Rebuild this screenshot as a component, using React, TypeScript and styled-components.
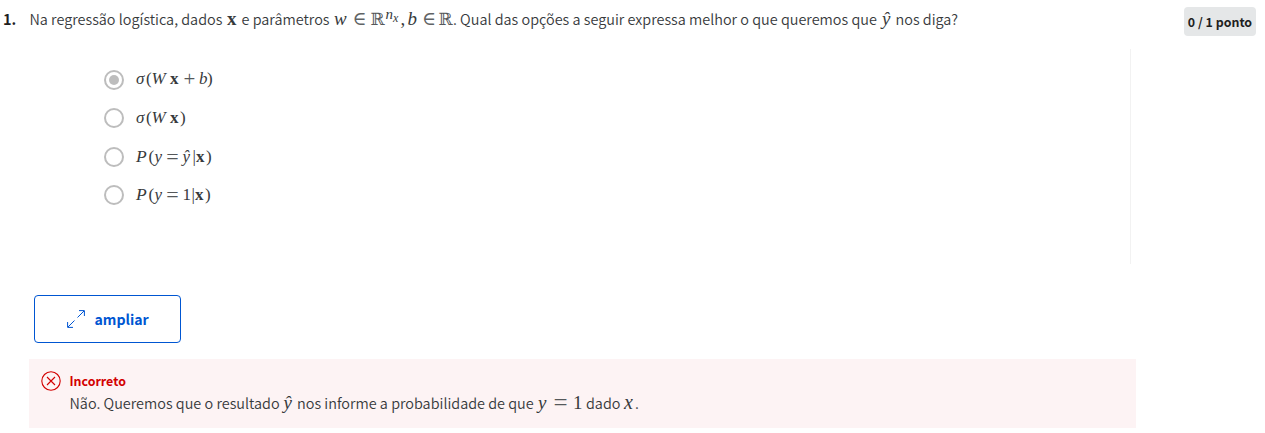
import React from "react";
import styled, { createGlobalStyle } from "styled-components";

const GlobalStyle = createGlobalStyle`
  * { box-sizing: border-box; }
  body {
    margin: 0;
    background: #fff;
    color: #373a3c;
    font-family: "Noto Sans CJK JP", "Noto Sans", sans-serif;
    font-size: 14.43px;
  }
`;

const Page = styled.main`
  display: flex;
  flex-direction: column;
  height: 433px;
  overflow: hidden;
`;

const Header = styled.header`
  display: flex;
  align-items: flex-start;
  height: 49px;
  padding-left: 3px;
`;

const Number = styled.strong`
  flex: none;
  width: 26.5px;
  padding-top: 7px;
  font-size: 14.5px;
  line-height: 24px;
  color: #1f1f1f;
`;

const Line = styled.p`
  display: flex;
  align-items: baseline;
  margin: 0;
  height: 24px;
  line-height: 24px;
  white-space: pre;
`;

const Prompt = styled(Line)`
  flex: 1;
  margin-top: 7px;
`;

const Run = styled.span<{ $w: number }>`
  flex: none;
  width: ${(p) => p.$w}px;
  font-weight: 350;
`;

const Sym = styled.span<{ $w: number; $size?: number }>`
  flex: none;
  width: ${(p) => p.$w}px;
  font-family: "Liberation Serif", "DejaVu Serif", serif;
  font-size: ${(p) => p.$size ?? 19}px;
  line-height: 20px;
`;

const Italic = styled(Sym)`
  font-style: italic;
`;

const Bold = styled(Sym)`
  font-weight: 700;
`;

const Double = styled(Sym)`
  font-family: "DejaVu Serif", serif;
  color: #55585a;
`;

const Element = styled(Sym)`
  color: #606365;
`;

const Relation = styled(Sym)`
  position: relative;
  top: 2px;
  display: flex;
  justify-content: center;
  padding-right: 2px;
  line-height: 12px;
  color: #55585a;
`;

const Exponent = styled(Italic)`
  position: relative;
  top: -6px;
`;

const Subscript = styled.span`
  position: relative;
  top: 3px;
  font-size: 12px;
`;

const Points = styled.span`
  flex: none;
  width: 72px;
  height: 29px;
  margin: 7px 9px 0 0;
  border-radius: 4px;
  background: #e5e7e8;
  color: #1f1f1f;
  font-size: 12.4px;
  font-weight: 700;
  line-height: 30px;
  text-align: center;
  white-space: nowrap;
`;

const Options = styled.div`
  display: flex;
  flex-direction: column;
  width: 1131px;
  height: 215px;
  padding: 11.6px 0 0 104px;
  border-right: 1px solid #f2f2f2;
`;

const Option = styled.label`
  display: flex;
  align-items: center;
  height: 38.4px;
`;

const Radio = styled.span<{ $checked?: boolean }>`
  display: grid;
  place-items: center;
  flex: none;
  width: 20px;
  height: 20px;
  margin-right: 12px;
  border: 2px solid #bdbdbd;
  border-radius: 50%;

  &::after {
    content: "";
    width: 10px;
    height: 10px;
    border-radius: 50%;
    background: ${(p) => (p.$checked ? "#bdbdbd" : "transparent")};
  }
`;

const Formula = styled.span`
  display: flex;
  align-items: baseline;
  height: 20px;
  margin-bottom: 1.2px;
  line-height: 20px;
  white-space: pre;
`;

const ExpandButton = styled.button`
  display: flex;
  flex: none;
  align-items: center;
  width: 147px;
  height: 48px;
  margin: 31px 0 0 34px;
  padding: 0 0 0 32px;
  border: 1px solid #0056d2;
  border-radius: 4px;
  background: #fff;
  color: #0056d2;
  font-family: inherit;
  font-size: 14.1px;
  font-weight: 700;
  line-height: 24px;

  svg { margin-right: 9.5px; }
`;

const Feedback = styled.section`
  display: flex;
  align-items: flex-start;
  width: 1107px;
  height: 69px;
  margin: 16px 0 0 29px;
  padding: 12px 0 0 12px;
  background: #fdf3f4;

  svg { flex: none; margin-right: 8.5px; }
`;

const Verdict = styled.strong`
  display: block;
  height: 20px;
  color: #d30001;
  font-size: 12.4px;
  line-height: 20px;
`;

export default function App() {
  return (
    <Page>
      <GlobalStyle />
      <Header>
        <Number>1.</Number>
        <Prompt>
          <Run $w={197.5}>Na regressão logística, dados</Run>
          <Bold $w={14.5}>x</Bold>
          <Run $w={92.5}>e parâmetros</Run>
          <Italic $w={18.5}>w</Italic>
          <Element $w={18} $size={19}>∈</Element>
          <Double $w={15} $size={17}>ℝ</Double>
          <Exponent $w={15} $size={15}>n<Subscript>x</Subscript></Exponent>
          <Sym $w={7}>,</Sym>
          <Italic $w={14.5}>b</Italic>
          <Element $w={16.5} $size={19}>∈</Element>
          <Double $w={14.5} $size={17}>ℝ</Double>
          <Run $w={429}>. Qual das opções a seguir expressa melhor o que queremos que</Run>
          <Italic $w={13.5}>ŷ</Italic>
          <Run $w={64}>nos diga?</Run>
        </Prompt>
        <Points>0 / 1 ponto</Points>
      </Header>

      <Options>
        <Option>
          <Radio $checked />
          <Formula>
            <Italic $w={10} $size={17}>σ</Italic>
            <Sym $w={5.5} $size={17}>(</Sym>
            <Italic $w={18.5} $size={17}>W</Italic>
            <Bold $w={12} $size={17}>x</Bold>
            <Relation $w={17} $size={21}>+</Relation>
            <Italic $w={8} $size={17}>b</Italic>
            <Sym $w={6} $size={17}>)</Sym>
          </Formula>
        </Option>
        <Option>
          <Radio />
          <Formula>
            <Italic $w={10} $size={17}>σ</Italic>
            <Sym $w={5.5} $size={17}>(</Sym>
            <Italic $w={18.5} $size={17}>W</Italic>
            <Bold $w={10} $size={17}>x</Bold>
            <Sym $w={6} $size={17}>)</Sym>
          </Formula>
        </Option>
        <Option>
          <Radio />
          <Formula>
            <Italic $w={12.5} $size={17.5}>P</Italic>
            <Sym $w={6} $size={17}>(</Sym>
            <Italic $w={10} $size={17}>y</Italic>
            <Relation $w={18} $size={22}>=</Relation>
            <Italic $w={10} $size={17}>ŷ</Italic>
            <Sym $w={3.5} $size={17}>|</Sym>
            <Bold $w={10} $size={17}>x</Bold>
            <Sym $w={6} $size={17}>)</Sym>
          </Formula>
        </Option>
        <Option>
          <Radio />
          <Formula>
            <Italic $w={12.5} $size={17.5}>P</Italic>
            <Sym $w={6} $size={17}>(</Sym>
            <Italic $w={10} $size={17}>y</Italic>
            <Relation $w={18} $size={22}>=</Relation>
            <Sym $w={9} $size={17}>1</Sym>
            <Sym $w={3.5} $size={17}>|</Sym>
            <Bold $w={10} $size={17}>x</Bold>
            <Sym $w={6} $size={17}>)</Sym>
          </Formula>
        </Option>
      </Options>

      <ExpandButton>
        <svg width="18" height="18" viewBox="0 0 18 18" fill="none" stroke="currentColor" strokeWidth="1">
          <path d="M10.5 7.5 17 1M12 .6h5.4V6M7.5 10.5 1 17M.6 12v5.4H6" />
        </svg>
        ampliar
      </ExpandButton>

      <Feedback>
        <svg width="20" height="20" viewBox="0 0 20 20" fill="none" stroke="#d30001" strokeWidth="1.1">
          <circle cx="10" cy="10" r="9.2" />
          <path d="m6 6 8 8M14 6l-8 8" />
        </svg>
        <div>
          <Verdict>Incorreto</Verdict>
          <Line>
            <Run $w={214}>Não. Queremos que o resultado</Run>
            <Italic $w={13.5}>ŷ</Italic>
            <Run $w={241}>nos informe a probabilidade de que</Run>
            <Italic $w={12}>y</Italic>
            <Relation $w={23} $size={25}>=</Relation>
            <Sym $w={13}>1</Sym>
            <Run $w={38}>dado</Run>
            <Italic $w={11} $size={20}>x</Italic>
            <Run $w={6}>.</Run>
          </Line>
        </div>
      </Feedback>
    </Page>
  );
}
